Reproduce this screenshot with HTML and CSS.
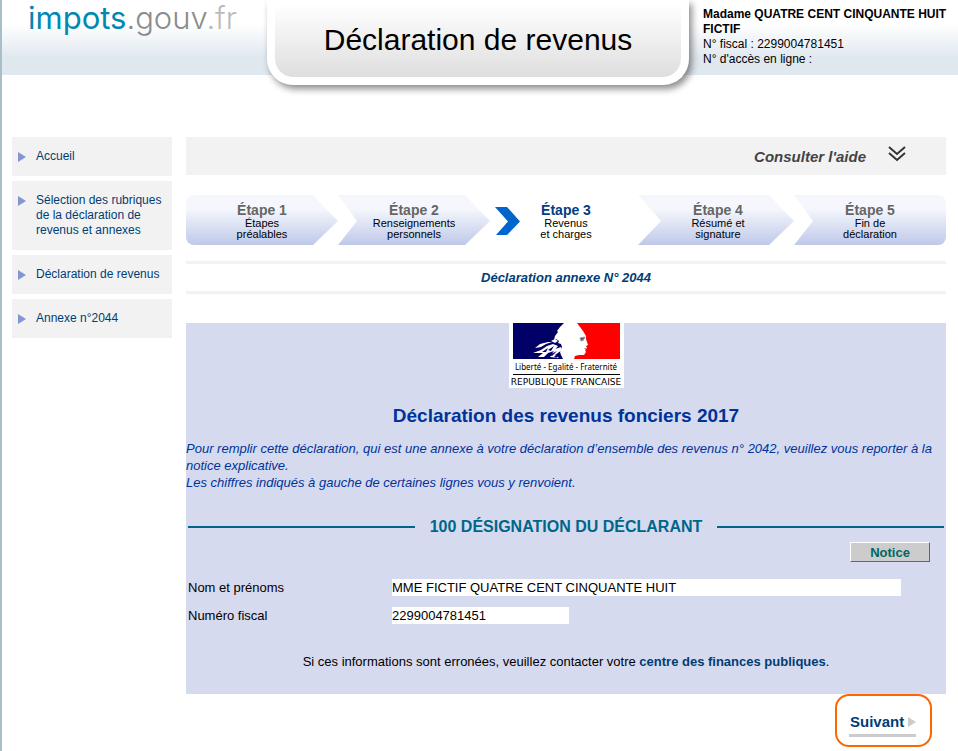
FILE: index.html
```html
<!DOCTYPE html>
<html lang="fr">
<head>
<meta charset="utf-8">
<title>Déclaration de revenus</title>
<link rel="stylesheet" href="styles.css">
</head>
<body>
<header class="header">
  <a class="brand" href="#"><span class="brand-main">impots</span><span class="brand-gouv">.gouv</span><span class="brand-fr">.fr</span></a>
  <div class="title-card"><h1 class="title">Déclaration de revenus</h1></div>
  <div class="user">
    <strong>Madame QUATRE CENT CINQUANTE HUIT FICTIF</strong><br>
    N° fiscal : 2299004781451<br>
    N° d'accès en ligne :
  </div>
</header>
<div class="layout">
  <nav class="menu">
    <a class="menu-item" href="#">Accueil</a>
    <a class="menu-item" href="#">Sélection des rubriques de la déclaration de revenus et annexes</a>
    <a class="menu-item" href="#">Déclaration de revenus</a>
    <a class="menu-item" href="#">Annexe n°2044</a>
  </nav>
  <main class="main">
    <button class="help" type="button">Consulter l'aide
      <svg class="help-icon" width="18" height="16" viewBox="0 0 18 16" fill="none" stroke="#333" stroke-width="2"><path d="M1 1l8 7 8-7M1 7l8 7 8-7"/></svg>
    </button>
    <ol class="steps">
      <li class="step step-first"><b class="step-name">Étape 1</b><span>Étapes<br>préalables</span></li>
      <li class="step"><b class="step-name">Étape 2</b><span>Renseignements<br>personnels</span></li>
      <li class="step step-current"><svg class="step-mark" width="26" height="28" viewBox="0 0 26 28"><path d="M0 0h12l13 14.500L12 28H1l12-13.500z" fill="#0066cc"/></svg><b class="step-name">Étape 3</b><span>Revenus<br>et charges</span></li>
      <li class="step step-next"><b class="step-name">Étape 4</b><span>Résumé et<br>signature</span></li>
      <li class="step step-last"><b class="step-name">Étape 5</b><span>Fin de<br>déclaration</span></li>
    </ol>
    <h2 class="annex">Déclaration annexe N° 2044</h2>
    <section class="panel">
      <div class="republic">
        <svg class="flag" width="107" height="36" viewBox="0 0 107 36">
          <path d="M0 0h51l-4 4-3 4 1 1-3 4-1 4 2-1 3 2-1 2 3 1 1 3-2 5 1 3 2 4H0z" fill="#000066"/>
          <path d="M64 0h43v36H61l1-3 4-1h5l2-3-1-2 2-2-1-2 2-1-2-6v-3l-3-5-3-4z" fill="#ff0000"/>
          <path d="M22 25l5-4 8-2 4 0-6 2-5 3zM20 30l8-3 6-4 6-2 5 2-4 5-6 2-4 4-6 0 5-4z" fill="#fff"/>
          <path d="M38 18l4-2 3 2-3 2zM42 26l6-2 1 3-7 5 4 3-9-1z" fill="#fff"/>
          <path d="M29 29l6-4-2 4zM35 27l6-4-3 5zM36 32l8-4-5 5zM41 33l5-1-3 3z" fill="#000066"/>
          <path d="M67 15l5-1-1 2-3 2zM68 18l3-1" stroke="#999" fill="#555"/>
          <path d="M71 25l3 0-2 1z" fill="#777"/>
        </svg>
        <span class="motto">Liberté - Egalité - Fraternité</span>
        <span class="state">REPUBLIQUE FRANCAISE</span>
      </div>
      <h2 class="panel-title">Déclaration des revenus fonciers 2017</h2>
      <p class="intro">Pour remplir cette déclaration, qui est une annexe à votre déclaration d’ensemble des revenus n° 2042, veuillez vous reporter à la notice explicative.<br>Les chiffres indiqués à gauche de certaines lignes vous y renvoient.</p>
      <h3 class="section-title">100 DÉSIGNATION DU DÉCLARANT</h3>
      <button class="notice" type="button">Notice</button>
      <div class="fields">
        <label for="nom">Nom et prénoms</label>
        <input id="nom" class="field" type="text" value="MME FICTIF QUATRE CENT CINQUANTE HUIT" readonly>
        <label for="numero">Numéro fiscal</label>
        <input id="numero" class="field field-short" type="text" value="2299004781451" readonly>
      </div>
      <p class="contact">Si ces informations sont erronées, veuillez contacter votre <a class="contact-link" href="#">centre des finances publiques</a>.</p>
    </section>
    <div class="next-box"><button class="next" type="button">Suivant</button></div>
  </main>
</div>
</body>
</html>
```
FILE: styles.css
```css
* { box-sizing: border-box; }

body {
  margin: 0;
  min-height: 100vh;
  border-left: 2px solid #a9bfc7;
  background: #fff;
  color: #000;
  font: 12px/15px "Liberation Sans", Arial, sans-serif;
}

a { color: inherit; text-decoration: none; }
button, input { font: inherit; }

.header {
  display: grid;
  grid-template-columns: 265px 422px 1fr;
  height: 75px;
  background: linear-gradient(#fff 24px, #e0e8ef 58px);
}

.brand {
  padding-left: 26px;
  font: 300 31px/36px Inter, sans-serif;
  white-space: nowrap;
}
.brand-main { color: #0088b4; font-weight: 400; }
.brand-gouv { color: #8c8c8c; }
.brand-fr { color: #bbb; }

.title-card {
  height: 85px;
  border: 8px solid #fff;
  border-top: 0;
  border-radius: 0 0 26px 26px;
  background: linear-gradient(#fff 4px, #dedede);
  background-clip: padding-box;
  background-color: #fff;
  box-shadow: 3px 4px 7px rgba(0, 0, 0, .45);
}
.title {
  margin: 0;
  padding-top: 22px;
  font-size: 30px;
  line-height: 36px;
  font-weight: 400;
  text-align: center;
}

.user { padding: 7px 6px 0 14px; }

.layout {
  display: grid;
  grid-template-columns: 160px 1fr;
  gap: 14px;
  padding: 62px 12px 0 10px;
}

.menu { display: flex; flex-direction: column; gap: 5px; }
.menu-item {
  position: relative;
  padding: 12px 0 12px 24px;
  background: #f2f2f2;
  color: #003d75;
}
.menu-item::before {
  content: "";
  position: absolute;
  left: 6px;
  top: 15px;
  border: solid transparent;
  border-width: 5px 0 5px 8px;
  border-left-color: #8196d3;
}

.help {
  display: flex;
  justify-content: flex-end;
  align-items: center;
  gap: 22px;
  width: 100%;
  height: 38px;
  padding: 0 40px 0 0;
  border: 0;
  background: #f2f2f2;
  color: #444;
  font-size: 15px;
  font-weight: 700;
  font-style: italic;
}
.help-icon { margin-bottom: 4px; }

.steps {
  display: grid;
  grid-template-columns: repeat(5, 1fr);
  margin: 20px 0 16px;
  padding: 0;
  list-style: none;
}
.step {
  position: relative;
  z-index: 0;
  height: 50px;
  padding-top: 7px;
  font-size: 11px;
  line-height: 11px;
  text-align: center;
}
.step::before {
  content: "";
  position: absolute;
  z-index: -1;
  inset: 0;
  background: linear-gradient(#f5f7fc 14px, #bfc8e9);
  clip-path: polygon(0 0, calc(100% - 25px) 0, 100% 52%, calc(100% - 25px) 100%, 0 100%, 19px 52%);
}
.step-first::before {
  border-radius: 8px;
  clip-path: polygon(0 0, calc(100% - 25px) 0, 100% 52%, calc(100% - 25px) 100%, 0 100%);
}
.step-next::before {
  left: -4px;
  clip-path: polygon(0 0, calc(100% - 25px) 0, 100% 52%, calc(100% - 25px) 100%, 0 100%, 23px 52%);
}
.step-last::before {
  border-radius: 0 8px 8px 0;
  clip-path: polygon(0 0, 100% 0, 100% 100%, 0 100%, 19px 52%);
}
.step-current::before { display: none; }
.step-mark { position: absolute; left: 5px; top: 12px; }
.step-name {
  display: block;
  color: #666;
  font-size: 14px;
  line-height: 16px;
}
.step-current .step-name { color: #003d85; }

.annex {
  margin: 0 0 29px;
  border: solid #f2f2f2;
  border-width: 3px 0;
  color: #003d75;
  font-size: 13px;
  line-height: 27px;
  font-style: italic;
  text-align: center;
}

.panel {
  padding-bottom: 24px;
  background: #d6daef;
}
.republic {
  display: flex;
  flex-direction: column;
  align-items: center;
  width: 115px;
  height: 65px;
  margin: 0 auto;
  background: #fff;
  font-family: "DejaVu Sans", sans-serif;
  white-space: nowrap;
}
.flag { flex: none; }
.motto {
  width: 107px;
  border-bottom: 1px solid #000;
  font: 8px/15px "Noto Sans", sans-serif;
  text-align: center;
}
.state { font-size: 9px; line-height: 14px; }

.panel-title {
  margin: 18px 0 14px;
  color: #003399;
  font-size: 19px;
  line-height: 20px;
  text-align: center;
}
.intro {
  margin: 0;
  color: #003399;
  font-size: 13px;
  line-height: 17px;
  font-style: italic;
}
.section-title {
  display: flex;
  align-items: center;
  gap: 15px;
  margin: 26px 2px 5px;
  color: #006688;
  font-size: 16px;
  line-height: 20px;
}
.section-title::before,
.section-title::after {
  content: "";
  flex: 1;
  height: 2px;
  background: #006688;
}
.notice {
  display: block;
  width: 80px;
  height: 20px;
  margin: 0 16px 17px auto;
  padding: 0;
  border: solid;
  border-width: 1px;
  border-color: #fff #666 #666 #fff;
  background: #ccc;
  color: #006666;
  font-size: 13px;
  font-weight: 700;
}
.fields {
  display: grid;
  grid-template-columns: 200px 1fr;
  align-items: center;
  gap: 11px 4px;
  margin: 0 45px 0 2px;
  font-size: 13px;
  line-height: 17px;
}
.field {
  width: 100%;
  height: 17px;
  padding: 0;
  border: 0;
  background: #fff;
  color: #000;
}
.field-short { width: 177px; }
.contact {
  margin: 29px 0 0;
  font-size: 13px;
  line-height: 17px;
  text-align: center;
}
.contact-link { color: #003d75; font-weight: 700; }

.next-box {
  width: 97px;
  height: 53px;
  margin: 0 14px 0 auto;
  padding: 17px 13px 0 12px;
  border: 2px solid #ff6600;
  border-radius: 14px;
}
.next {
  display: flex;
  align-items: center;
  gap: 4px;
  padding: 0 0 3px 1px;
  border: 0;
  border-bottom: 3px solid #ccc;
  background: none;
  color: #003d75;
  font-size: 15px;
  line-height: 18px;
  font-weight: 700;
}
.next::after {
  content: "";
  border: solid transparent;
  border-width: 5px 0 5px 8px;
  border-left-color: #ccc;
}
```
